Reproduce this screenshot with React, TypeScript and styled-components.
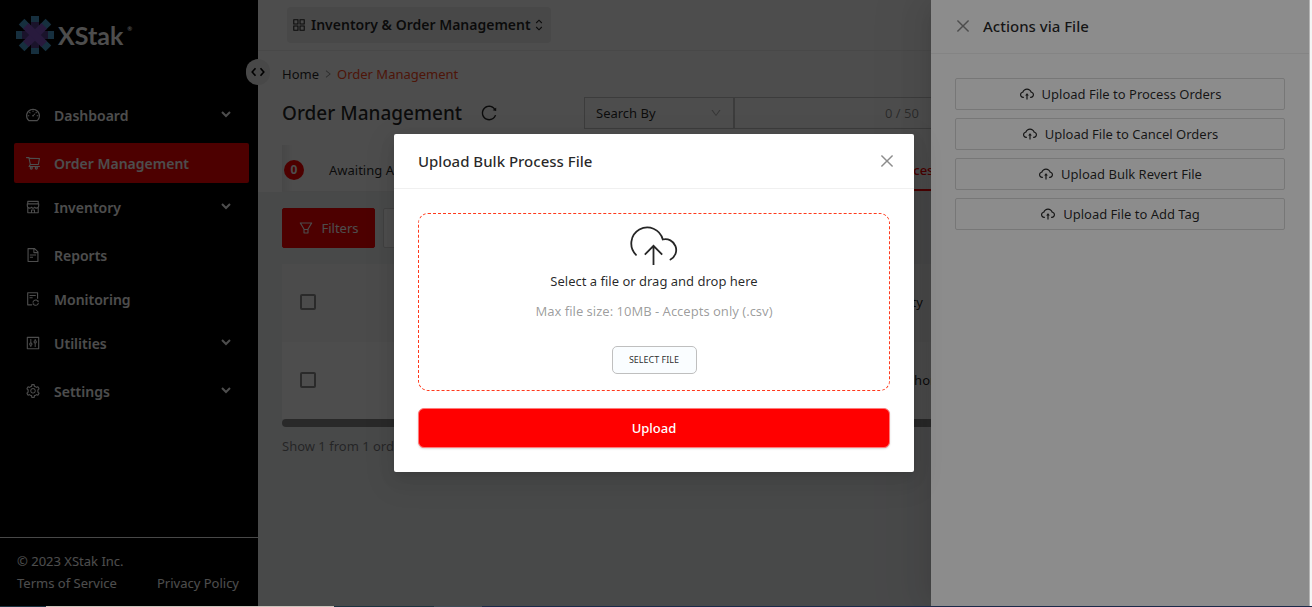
import React from "react";
import styled, { createGlobalStyle } from "styled-components";
import {
  AiOutlineAppstore,
  AiOutlineClose,
  AiOutlineCloudUpload,
  AiOutlineControl,
  AiOutlineDashboard,
  AiOutlineDown,
  AiOutlineFileSync,
  AiOutlineFileText,
  AiOutlineFilter,
  AiOutlineReload,
  AiOutlineRight,
  AiOutlineSetting,
  AiOutlineShop,
  AiOutlineShoppingCart,
} from "react-icons/ai";
import type { IconType } from "react-icons";

const GlobalStyle = createGlobalStyle`
  *, *::before, *::after { box-sizing: border-box; }
  body {
    margin: 0;
    font-family: "Noto Sans", "Open Sans", sans-serif;
    font-size: 13px;
    line-height: 22px;
    color: rgba(0, 0, 0, 0.85);
  }
  button, input, select { font: inherit; color: inherit; }
  a { color: inherit; text-decoration: none; }
`;

const Screen = styled.div`
  display: grid;
  grid-template-columns: minmax(0, 1fr) 3px;
  grid-template-rows: minmax(0, 1fr) 1px;
  height: 100vh;
  overflow: hidden;
`;

const Viewport = styled.div`
  position: relative;
  display: flex;
  overflow: hidden;
  background: #f0f2f5;
`;

const WindowEdge = styled.div`
  background: #f4f4f4;
  border-left: 1px solid #b4b4b4;
`;

const TaskbarEdge = styled.div`
  grid-column: 1 / -1;
  background: linear-gradient(90deg, #1c3340 46px, #cbc4bc 46px 334px, #1c3340 334px 434px, #3d4c58 434px 482px, #1a2a4a 482px);
`;

/* Sidebar */

const Sidebar = styled.aside`
  display: flex;
  flex-direction: column;
  flex: 0 0 258px;
  position: relative;
  background: #000;
  color: #fff;
`;

const Brand = styled.div`
  display: flex;
  align-items: center;
  gap: 4px;
  padding: 16px 16px 0;
  font-family: Lato, sans-serif;
  font-size: 25px;
  font-weight: 700;
  line-height: 38px;
`;

const BrandMark = styled.sup`
  align-self: flex-start;
  font-size: 6px;
  line-height: 26px;
`;

const CollapseButton = styled.button`
  position: absolute;
  top: 59px;
  right: -12px;
  display: grid;
  place-items: center;
  width: 24px;
  height: 26px;
  padding: 0;
  border: 0;
  border-radius: 12px;
  background: #f0f0f0;
`;

const Menu = styled.nav`
  display: flex;
  flex-direction: column;
  flex: 1;
  padding: 41px 9px 0 14px;
`;

const MenuItem = styled.a<{ $active?: boolean; $group?: boolean }>`
  display: flex;
  align-items: center;
  height: 40px;
  margin-bottom: ${(p) => (p.$group ? 8 : 4)}px;
  padding: 0 18px 0 11px;
  border-radius: 2px;
  background: ${(p) => (p.$active ? "#f00" : "transparent")};
  font-size: 14px;
  font-weight: 600;

  span { flex: 1; margin-left: 13px; padding-top: 2px; }
`;

const SidebarFooter = styled.footer`
  padding: 12px 19px 12px 17px;
  border-top: 1px solid #f0f0f0;
`;

const FooterLinks = styled.div`
  display: flex;
  justify-content: space-between;
`;

/* Main page */

const Page = styled.div`
  order: 1;
  flex: 1;
  min-width: 0;
`;

const TopBar = styled.header`
  padding: 7px 29px;
  height: 51px;
  background: #fff;
  border-bottom: 1px solid #f0f0f0;
`;

const ModuleSwitch = styled.button`
  display: flex;
  align-items: center;
  gap: 4px;
  height: 36px;
  padding: 0 8px 0 4px;
  border: 0;
  border-radius: 4px;
  background: #f0f0f0;
  font-size: 14px;
  font-weight: 600;
`;

const PageHead = styled.section`
  padding: 12px 24px 0;
  background: #fff;
`;

const Breadcrumb = styled.nav`
  display: flex;
  align-items: center;
  gap: 4px;

  a:last-child { color: #ff4a1c; }
  svg { color: rgba(0, 0, 0, 0.45); }
`;

const TitleRow = styled.div`
  display: flex;
  align-items: center;
  margin-top: 12px;
  height: 32px;
`;

const Title = styled.h1`
  flex: 0 0 auto;
  width: 180px;
  margin: 0;
  font-size: 19px;
  font-weight: 500;
  white-space: nowrap;
`;

const IconButton = styled.button`
  display: grid;
  place-items: center;
  padding: 0;
  border: 0;
  background: transparent;
`;

const ReloadButton = styled(IconButton)`
  margin-left: 18px;
`;

const SearchGroup = styled.div`
  display: flex;
  flex: 1;
  margin-left: 86px;
`;

const SelectBox = styled.label`
  display: flex;
  align-items: center;
  flex: 0 0 150px;
  height: 32px;
  padding: 0 11px;
  border: 1px solid #c9c9c9;

  select {
    flex: 1;
    min-width: 0;
    padding: 0;
    border: 0;
    background: transparent;
    appearance: none;
  }
  svg { color: rgba(0, 0, 0, 0.3); }
`;

const SearchBox = styled.label`
  display: flex;
  align-items: center;
  flex: 1;
  height: 32px;
  border: 1px solid #c9c9c9;
  color: rgba(0, 0, 0, 0.45);

  input {
    width: 150px;
    padding: 0 11px;
    border: 0;
    background: transparent;
  }
`;

const Tabs = styled.div`
  display: flex;
  height: 47px;
  margin-top: 16px;
  background: linear-gradient(90deg, #ebebeb, #fff 10px);
  border-bottom: 1px solid #f0f0f0;
`;

const Tab = styled.button<{ $active?: boolean }>`
  display: flex;
  align-items: center;
  padding: 5px 4px 0 0;
  border: 0;
  border-bottom: 2px solid ${(p) => (p.$active ? "#f00" : "transparent")};
  background: transparent;
  color: ${(p) => (p.$active ? "#f00" : "inherit")};
  font-weight: ${(p) => (p.$active ? 500 : 400)};
  white-space: nowrap;

  &:first-child { flex: 0 0 594px; }
`;

const Badge = styled.span`
  width: 20px;
  height: 20px;
  margin: 0 25px 0 2px;
  border-radius: 10px;
  background: #f00;
  color: #fff;
  font-size: 12px;
  font-weight: 700;
  line-height: 20px;
  text-align: center;
`;

const Content = styled.main`
  padding: 16px 24px;
`;

const Toolbar = styled.div`
  display: flex;
  gap: 8px;
  margin-bottom: 16px;
`;

const ToolButton = styled.button<{ $primary?: boolean }>`
  display: flex;
  align-items: center;
  justify-content: center;
  gap: 7px;
  width: 93px;
  height: 40px;
  padding: 0;
  border: 1px solid ${(p) => (p.$primary ? "#f00" : "#d9d9d9")};
  border-radius: 2px;
  background: ${(p) => (p.$primary ? "#f00" : "#fff")};
  color: ${(p) => (p.$primary ? "#fff" : "inherit")};
`;

const TableScroll = styled.div`
  overflow: hidden;
  background: #fff;
`;

const Table = styled.table`
  width: 1100px;
  border-collapse: collapse;
  table-layout: fixed;

  th, td {
    height: 78px;
    padding: 0 0 2px;
    font-weight: 400;
    text-align: left;
  }
  tbody td { height: 77px; }
  thead { background: #fafafa; }
  th:first-child, td:first-child { width: 618px; padding-left: 18px; }
`;

const Checkbox = styled.input`
  display: block;
  width: 16px;
  height: 16px;
  margin: 0;
  border: 2px solid #8c8c8c;
  border-radius: 2px;
  appearance: none;
`;

const ScrollThumb = styled.div`
  height: 8px;
  border-radius: 4px;
  background: #8a8a8a;
`;

const Summary = styled.p`
  margin: 8px 0 0;
  color: rgba(0, 0, 0, 0.5);
`;

/* Overlays */

const Mask = styled.div`
  position: absolute;
  inset: 0;
  background: rgba(0, 0, 0, 0.45);
`;

const Drawer = styled.aside`
  position: absolute;
  inset: 0 0 0 auto;
  width: 378px;
  background: #fff;
  box-shadow: -6px 0 16px -8px rgba(0, 0, 0, 0.08), -9px 0 28px rgba(0, 0, 0, 0.05),
    -12px 0 48px 16px rgba(0, 0, 0, 0.03);
`;

const DrawerHead = styled.header`
  display: flex;
  align-items: center;
  gap: 11px;
  height: 54px;
  padding: 0 23px 1px;
  border-bottom: 1px solid #f0f0f0;
`;

const PanelTitle = styled.h2`
  flex: 1;
  margin: 0;
  font-size: 15px;
  font-weight: 500;
`;

const DrawerBody = styled.div`
  display: flex;
  flex-direction: column;
  gap: 8px;
  padding: 24px;
`;

const ActionButton = styled.button`
  display: flex;
  align-items: center;
  justify-content: center;
  gap: 7px;
  height: 32px;
  border: 1px solid #d9d9d9;
  border-radius: 2px;
  background: #fff;
`;

const ModalLayer = styled.div`
  position: absolute;
  inset: 0 1px 0 0;
  display: grid;
  place-items: center;
`;

const Modal = styled.section`
  width: 520px;
  border-radius: 2px;
  background: #fff;
  box-shadow: 0 3px 6px -4px rgba(0, 0, 0, 0.12), 0 6px 16px rgba(0, 0, 0, 0.08),
    0 9px 28px 8px rgba(0, 0, 0, 0.05);
`;

const ModalHead = styled.header`
  display: flex;
  align-items: center;
  height: 55px;
  padding: 0 18px 0 24px;
  border-bottom: 1px solid #f0f0f0;
`;

const ModalBody = styled.div`
  display: flex;
  flex-direction: column;
  gap: 17px;
  padding: 24px;
`;

const DropZone = styled.div`
  display: flex;
  flex-direction: column;
  align-items: center;
  height: 178px;
  padding-top: 12px;
  border: 1px dashed #ff3a1c;
  border-radius: 10px;

  p { margin: 4px 0 0; }
  p + p { margin-top: 8px; color: rgba(0, 0, 0, 0.4); }
`;

const SelectFileButton = styled.button`
  width: 85px;
  height: 28px;
  margin-top: 24px;
  padding: 0;
  border: 1px solid #bfbfbf;
  border-radius: 5px;
  background: #fafdff;
  font-size: 9px;
`;

const UploadButton = styled.button`
  height: 40px;
  border: 1px solid #ff7a7a;
  border-radius: 6px;
  background: #f00;
  color: #fff;
  font-weight: 500;
  box-shadow: 0 1px 2px rgba(0, 0, 0, 0.15);
`;

const Logo = () => (
  <svg width="38" height="38" viewBox="-19 -19 38 38" aria-hidden="true">
    {[0, 45, 90, 135, 180, 225, 270, 315].map((a) => (
      <rect key={a} x="-4" y="-19" width="8" height="8" fill="#4a9fd0" transform={`rotate(${a})`} />
    ))}
    <path d="M-4-13h8v26h-8zM-13-4h26v8h-26z" fill="#5a4390" />
    <path d="M-4-13h8v26h-8z" fill="#8558cc" transform="rotate(45)" />
    <path d="M-4-13h8v26h-8z" fill="#8558cc" transform="rotate(-45)" />
  </svg>
);

const CloudArrow = () => (
  <svg width="48" height="40" viewBox="0 0 48 40" fill="none" stroke="#262626" strokeWidth="1.8" aria-hidden="true">
    <path d="M6 28.8A16 16 0 1 1 32.8 13.5A10.8 10.8 0 0 1 40.5 33.5" strokeLinecap="round" />
    <path d="M23.5 39V20M14.8 28.6l8.7-8.8 8.7 8.8" />
  </svg>
);

const AngleBrackets = () => (
  <svg width="14" height="10" viewBox="0 0 14 10" fill="none" stroke="#000" strokeWidth="1.6" aria-hidden="true">
    <path d="M4.5 1.2L1.2 5l3.3 3.8M9.5 1.2L12.8 5 9.5 8.8" />
  </svg>
);

const Sorter = () => (
  <svg width="8" height="12" viewBox="0 0 8 12" fill="none" stroke="#262626" strokeWidth="1.1" aria-hidden="true">
    <path d="M1.2 4L4 1.2 6.8 4M1.2 8L4 10.8 6.8 8" />
  </svg>
);

const Chevron = () => (
  <svg width="10" height="9" viewBox="0 0 10 9" fill="none" stroke="currentColor" strokeWidth="2" aria-hidden="true">
    <path d="M1 1l4 4 4-4" />
  </svg>
);

const menu: { label: string; icon: IconType; group?: boolean; active?: boolean }[] = [
  { label: "Dashboard", icon: AiOutlineDashboard, group: true },
  { label: "Order Management", icon: AiOutlineShoppingCart, active: true },
  { label: "Inventory", icon: AiOutlineShop, group: true },
  { label: "Reports", icon: AiOutlineFileText },
  { label: "Monitoring", icon: AiOutlineFileSync },
  { label: "Utilities", icon: AiOutlineControl, group: true },
  { label: "Settings", icon: AiOutlineSetting, group: true },
];

const actions = [
  "Upload File to Process Orders",
  "Upload File to Cancel Orders",
  "Upload Bulk Revert File",
  "Upload File to Add Tag",
];

export default function App() {
  return (
    <Screen>
      <GlobalStyle />
      <Viewport>
        <Page>
          <TopBar>
            <ModuleSwitch>
              <AiOutlineAppstore size={16} />
              Inventory &amp; Order Management
              <Sorter />
            </ModuleSwitch>
          </TopBar>
          <PageHead>
            <Breadcrumb>
              <a href="#home">Home</a>
              <AiOutlineRight size={10} />
              <a href="#orders">Order Management</a>
            </Breadcrumb>
            <TitleRow>
              <Title>Order Management</Title>
              <ReloadButton aria-label="Reload">
                <AiOutlineReload size={18} />
              </ReloadButton>
              <SearchGroup>
                <SelectBox>
                  <select aria-label="Search by">
                    <option>Search By</option>
                  </select>
                  <AiOutlineDown size={12} />
                </SelectBox>
                <SearchBox>
                  <input type="text" aria-label="Search" />0 / 50
                </SearchBox>
              </SearchGroup>
            </TitleRow>
            <Tabs>
              <Tab>
                <Badge>0</Badge>
                Awaiting A
              </Tab>
              <Tab $active>In Process</Tab>
            </Tabs>
          </PageHead>
          <Content>
            <Toolbar>
              <ToolButton $primary>
                <AiOutlineFilter size={16} />
                Filters
              </ToolButton>
              <ToolButton aria-label="More" />
            </Toolbar>
            <TableScroll>
              <Table>
                <thead>
                  <tr>
                    <th>
                      <Checkbox type="checkbox" aria-label="Select all orders" />
                    </th>
                    <th>City</th>
                  </tr>
                </thead>
                <tbody>
                  <tr>
                    <td>
                      <Checkbox type="checkbox" aria-label="Select order" />
                    </td>
                    <td>Lahore</td>
                  </tr>
                </tbody>
              </Table>
            </TableScroll>
            <ScrollThumb />
            <Summary>Show 1 from 1 orders</Summary>
          </Content>
        </Page>
        <Sidebar>
          <Brand>
            <Logo />
            XStak
            <BrandMark>®</BrandMark>
          </Brand>
          <CollapseButton aria-label="Collapse sidebar">
            <AngleBrackets />
          </CollapseButton>
          <Menu>
            {menu.map(({ label, icon: Icon, group, active }) => (
              <MenuItem key={label} href="#" $group={group} $active={active}>
                <Icon size={16} />
                <span>{label}</span>
                {group && <Chevron />}
              </MenuItem>
            ))}
          </Menu>
          <SidebarFooter>
            © 2023 XStak Inc.
            <FooterLinks>
              <a href="#terms">Terms of Service</a>
              <a href="#privacy">Privacy Policy</a>
            </FooterLinks>
          </SidebarFooter>
        </Sidebar>
        <Mask />
        <Drawer>
          <DrawerHead>
            <IconButton aria-label="Close drawer">
              <AiOutlineClose size={18} color="#8c8c8c" />
            </IconButton>
            <PanelTitle>Actions via File</PanelTitle>
          </DrawerHead>
          <DrawerBody>
            {actions.map((label) => (
              <ActionButton key={label}>
                <AiOutlineCloudUpload size={16} />
                {label}
              </ActionButton>
            ))}
          </DrawerBody>
        </Drawer>
        <Mask />
        <ModalLayer>
          <Modal role="dialog" aria-labelledby="upload-title">
            <ModalHead>
              <PanelTitle id="upload-title">Upload Bulk Process File</PanelTitle>
              <IconButton aria-label="Close">
                <AiOutlineClose size={18} color="#8c8c8c" />
              </IconButton>
            </ModalHead>
            <ModalBody>
              <DropZone>
                <CloudArrow />
                <p>Select a file or drag and drop here</p>
                <p>Max file size: 10MB - Accepts only (.csv)</p>
                <SelectFileButton>SELECT FILE</SelectFileButton>
              </DropZone>
              <UploadButton>Upload</UploadButton>
            </ModalBody>
          </Modal>
        </ModalLayer>
      </Viewport>
      <WindowEdge />
      <TaskbarEdge />
    </Screen>
  );
}
